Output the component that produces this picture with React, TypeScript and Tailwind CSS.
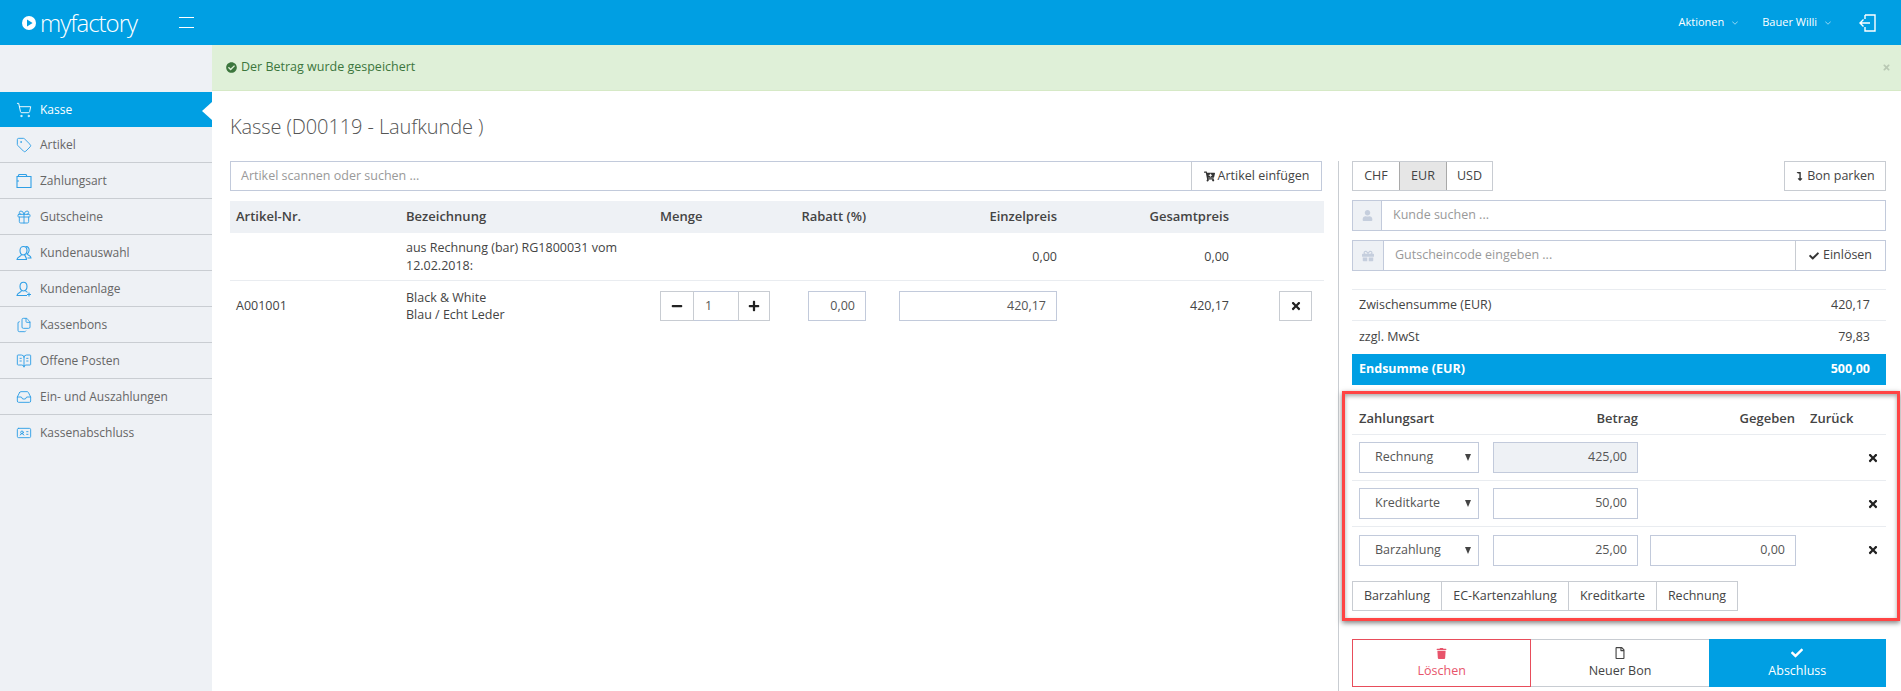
import { ChevronDown, Gift, ShoppingCart, Tag, Files, BookOpenText, Inbox, IdCard } from "lucide-react";
import { FaCheckCircle, FaUser, FaGift, FaTimes, FaCheck, FaCartPlus, FaLevelDownAlt, FaTrash, FaRegFile, FaMinus, FaPlus } from "react-icons/fa";

const WalletIcon = ({ className }: any) => (
  <svg width="16" height="16" viewBox="0 0 16 16" fill="none" stroke="currentColor" strokeWidth="1.1" className={className}>
    <path d="M1 3.5 H15 V14.5 H1 Z" />
    <path d="M2 3.5 L3 1.5 H10 L11 3.5" />
    <path d="M1 8 H3" />
  </svg>
);

const UsersIcon = ({ className }: any) => (
  <svg width="16" height="16" viewBox="0 0 16 16" fill="none" stroke="currentColor" strokeWidth="1.1" className={className}>
    <path d="M7 10 C4.5 9.5 4 7.5 4 5.5 C4 3 5.5 1.5 7.5 1.5 C9.5 1.5 11 3 11 5.5 C11 7.5 10 9.5 7 10" />
    <path d="M5.5 9.5 C5.5 11.5 1 11.5 1 14.5 H10.5 C10.5 12.5 9 11 8.5 9.5" />
    <path d="M9.5 1.8 C12 1 13.5 3.5 13 6 C12.8 7.5 12 8.5 11 9 C12 10.5 15 10.5 15 13 H11.5" />
  </svg>
);

const UserAddIcon = ({ className }: any) => (
  <svg width="16" height="16" viewBox="0 0 16 16" fill="none" stroke="currentColor" strokeWidth="1.1" className={className}>
    <path d="M7.5 10 C5 9.5 4 7.5 4 5.5 C4 3 5.5 1.2 7.5 1.2 C9.5 1.2 11 3 11 5.5 C11 7.5 10 9.5 7.5 10" />
    <path d="M5.5 9.5 C5.5 11.5 1 11.5 1 14.5 H11" />
    <path d="M9.5 9.5 C9.7 10.5 10.5 11 11.5 11.3" />
    <path d="M13 11.5 V15.5 M11 13.5 H15" />
  </svg>
);

const navItems = [
  { label: "Kasse", icon: ShoppingCart, active: true },
  { label: "Artikel", icon: Tag },
  { label: "Zahlungsart", icon: WalletIcon },
  { label: "Gutscheine", icon: Gift },
  { label: "Kundenauswahl", icon: UsersIcon },
  { label: "Kundenanlage", icon: UserAddIcon },
  { label: "Kassenbons", icon: Files },
  { label: "Offene Posten", icon: BookOpenText },
  { label: "Ein- und Auszahlungen", icon: Inbox },
  { label: "Kassenabschluss", icon: IdCard },
];

const tableCols = "grid grid-cols-[170px_254px_142px_70px_191px_172px_95px] items-center";

const inputCls = "h-[31px] border border-[#c2cadb] px-[10px] text-right text-[12.5px] text-[#555] flex items-center justify-end";

const Sidebar = () => (
  <aside className="w-[212px] shrink-0 bg-[#eef1f5] pt-[47px]">
    {navItems.map((item) => {
      const Icon = item.icon;
      return (
        <div
          key={item.label}
          className={`relative flex items-center gap-[8px] pl-[16px] text-[12px] ${
            item.active
              ? "h-[35px] bg-[#009fe3] text-white"
              : "h-[36px] border-b border-[#c9cdd2] text-[#666] last:border-b-0"
          }`}
        >
          <Icon size={16} strokeWidth={1.4} className={item.active ? "text-white" : "text-[#2f9fe6]"} />
          <span>{item.label}</span>
          {item.active && (
            <span className="absolute right-0 top-[10px] h-0 w-0 border-y-[9px] border-r-[10px] border-y-transparent border-r-white" />
          )}
        </div>
      );
    })}
  </aside>
);

const Header = () => (
  <header className="flex h-[45px] items-center bg-[#009fe3] text-white">
    <div className="flex w-[212px] items-center pl-[22px]">
      <svg width="14" height="14" viewBox="0 0 14 14" className="mt-[1px]">
        <circle cx="7" cy="7" r="7" fill="#fff" />
        <path d="M5 3.6 L10.6 7 L5 10.4 Z" fill="#009fe3" />
      </svg>
      <span className="ml-[4px] text-[24px] font-light leading-none tracking-[-1px]">myfactory</span>
      <span className="ml-[42px] flex h-[11px] w-[15px] shrink-0 flex-col justify-between">
        <span className="h-px bg-white" />
        <span className="h-px bg-white" />
      </span>
    </div>
    <div className="ml-auto flex items-center text-[11px]">
      <span>Aktionen</span>
      <ChevronDown size={10} className="ml-[6px] opacity-70" />
      <span className="ml-[22px]">Bauer Willi</span>
      <ChevronDown size={10} className="ml-[6px] opacity-70" />
      <svg width="17" height="18" viewBox="0 0 17 18" fill="none" stroke="#fff" strokeWidth="1.4" className="ml-[26px] mr-[25px]">
        <path d="M6 1 H16 V17 H6 V13" />
        <path d="M6 5 V1" />
        <path d="M11 9 H1 M4.5 5.5 L1 9 L4.5 12.5" />
      </svg>
    </div>
  </header>
);

const Cart = () => (
  <div className="w-[1126px] shrink-0 pl-[18px]">
    <h1 className="mt-[22px] h-[27px] text-[20px] font-light leading-[27px] tracking-[-0.1px] text-[#555]">Kasse (D00119 - Laufkunde )</h1>
    <div className="mt-[21px] flex h-[30px] w-[1092px] border border-[#c2cadb]">
      <div className="flex flex-1 items-center pl-[10px] text-[12.5px] text-[#999]">Artikel scannen oder suchen ...</div>
      <div className="flex w-[130px] items-center justify-center gap-[3px] border-l border-[#c8ccd2] text-[12.5px] text-[#444]">
        <FaCartPlus size={11} className="text-[#333]" /> Artikel einfügen
      </div>
    </div>

    <div className={`${tableCols} mt-[10px] h-[32px] w-[1094px] bg-[#eef1f5] text-[13px] font-semibold text-[#444]`}>
      <span className="pl-[6px]">Artikel-Nr.</span>
      <span className="pl-[6px]">Bezeichnung</span>
      <span className="pl-[6px]">Menge</span>
      <span className="text-right">Rabatt (%)</span>
      <span className="text-right">Einzelpreis</span>
      <span className="text-right">Gesamtpreis</span>
      <span />
    </div>
    <div className={`${tableCols} h-[48px] w-[1094px] border-b border-[#e9ecf0] text-[12.5px] leading-[18px] text-[#444]`}>
      <span />
      <span className="pl-[6px]">aus Rechnung (bar) RG1800031 vom 12.02.2018:</span>
      <span />
      <span />
      <span className="text-right">0,00</span>
      <span className="text-right">0,00</span>
      <span />
    </div>
    <div className={`${tableCols} h-[49px] w-[1094px] text-[12.5px] leading-[17px] text-[#444]`}>
      <span className="pl-[6px]">A001001</span>
      <span className="pl-[6px]">
        Black &amp; White
        <br />
        Blau / Echt Leder
      </span>
      <div className="ml-[6px] flex h-[30px] w-[110px]">
        <div className="flex w-[34px] items-center justify-center border border-[#c8ccd2]">
          <FaMinus size={12} className="text-[#222]" />
        </div>
        <div className="flex w-[44px] items-center border-y border-[#c2cadb] pl-[11px] text-[#555]">1</div>
        <div className="flex w-[32px] items-center justify-center border border-[#c8ccd2]">
          <FaPlus size={12} className="text-[#222]" />
        </div>
      </div>
      <div className={`${inputCls} !h-[30px] w-[58px] justify-self-end`}>0,00</div>
      <div className={`${inputCls} !h-[30px] w-[158px] justify-self-end`}>420,17</div>
      <span className="text-right">420,17</span>
      <div className="ml-[50px] flex h-[30px] w-[33px] items-center justify-center border border-[#c8ccd2]">
        <FaTimes size={12} className="text-[#222]" />
      </div>
    </div>
  </div>
);

const PaymentRow = ({ method, amount, given, disabled, last }: any) => (
  <div className={`flex h-[46px] items-center pl-[7px] ${last ? "" : "border-b border-[#e9ecf0]"}`}>
    <div className="relative flex h-[31px] w-[120px] items-center border border-[#c2cadb] pl-[15px] text-[12.5px] text-[#555]">
      {method}
      <span className="absolute right-[7px] top-[11px] h-0 w-0 border-x-[3.5px] border-t-[7px] border-x-transparent border-t-[#444]" />
    </div>
    <div className={`${inputCls} ml-[14px] w-[145px] ${disabled ? "bg-[#eef1f5]" : "bg-white"}`}>{amount}</div>
    {given && <div className={`${inputCls} ml-[12px] w-[146px]`}>{given}</div>}
    <FaTimes size={12} className="ml-auto mr-[7px] text-[#222]" />
  </div>
);

const Checkout = () => (
  <div className="relative ml-[13px] w-[534px] pt-[70px]">
    <div className="flex justify-between">
      <div className="flex h-[30px] border border-[#c8ccd2] text-[12.5px] text-[#444]">
        <span className="flex w-[46px] items-center justify-center">CHF</span>
        <span className="flex w-[48px] items-center justify-center border-x border-[#a9a9a9] bg-[#e6e6e6]">EUR</span>
        <span className="flex w-[45px] items-center justify-center">USD</span>
      </div>
      <div className="flex h-[30px] w-[102px] items-center justify-center gap-[3px] border border-[#c8ccd2] text-[12.5px] text-[#444]">
        <FaLevelDownAlt size={9} className="text-[#333]" /> Bon parken
      </div>
    </div>
    <div className="mt-[9px] flex h-[31px] border border-[#c2cadb]">
      <div className="flex w-[29px] items-center justify-center border-r border-[#c2cadb] bg-[#eef1f5]">
        <FaUser size={11} className="text-[#c5cedd]" />
      </div>
      <div className="flex items-center pl-[11px] text-[12.5px] text-[#999]">Kunde suchen ...</div>
    </div>
    <div className="mt-[9px] flex h-[31px] border border-[#c2cadb]">
      <div className="flex w-[31px] items-center justify-center border-r border-[#c2cadb] bg-[#eef1f5]">
        <FaGift size={12} className="text-[#c5cedd]" />
      </div>
      <div className="flex flex-1 items-center pl-[11px] text-[12.5px] text-[#999]">Gutscheincode eingeben ...</div>
      <div className="flex w-[90px] items-center justify-center gap-[4px] border-l border-[#c8ccd2] text-[12.5px] text-[#444]">
        <FaCheck size={10} className="text-[#333]" /> Einlösen
      </div>
    </div>

    <div className="mt-[18px] flex h-[32px] items-center justify-between border-y border-[#e9ecf0] px-[7px] pr-[16px] text-[12.5px] text-[#444]">
      <span>Zwischensumme (EUR)</span>
      <span>420,17</span>
    </div>
    <div className="flex h-[33px] items-center justify-between px-[7px] pr-[16px] text-[12.5px] text-[#444]">
      <span>zzgl. MwSt</span>
      <span>79,83</span>
    </div>
    <div className="flex h-[31px] items-center justify-between bg-[#009fe3] px-[7px] pr-[16px] text-[12.5px] font-bold text-white">
      <span>Endsumme (EUR)</span>
      <span>500,00</span>
    </div>

    <div className="mt-[18px] flex h-[32px] items-center border-b border-[#e9ecf0] text-[13px] font-semibold text-[#444]">
      <span className="w-[228px] pl-[7px]">Zahlungsart</span>
      <span className="w-[58px] text-right">Betrag</span>
      <span className="w-[157px] text-right">Gegeben</span>
      <span className="ml-[15px]">Zurück</span>
    </div>
    <PaymentRow method="Rechnung" amount="425,00" disabled />
    <PaymentRow method="Kreditkarte" amount="50,00" />
    <PaymentRow method="Barzahlung" amount="25,00" given="0,00" last />

    <div className="mt-[8px] flex h-[30px] w-[386px] border border-[#c8ccd2] text-[12.5px] text-[#444]">
      <span className="flex w-[88px] items-center justify-center">Barzahlung</span>
      <span className="flex w-[127px] items-center justify-center border-l border-[#c8ccd2]">EC-Kartenzahlung</span>
      <span className="flex w-[88px] items-center justify-center border-l border-[#c8ccd2]">Kreditkarte</span>
      <span className="flex flex-1 items-center justify-center border-l border-[#c8ccd2]">Rechnung</span>
    </div>

    <div className="mt-[28px] flex h-[48px] text-[12.5px] leading-[16px]">
      <div className="flex flex-1 flex-col items-center justify-center border border-[#e84d5b] text-[#e8546b]">
        <FaTrash size={11} />
        <span className="mt-[4px]">Löschen</span>
      </div>
      <div className="flex flex-1 flex-col items-center justify-center border-y border-[#c8ccd2] text-[#444]">
        <FaRegFile size={12} />
        <span className="mt-[4px]">Neuer Bon</span>
      </div>
      <div className="flex flex-1 flex-col items-center justify-center bg-[#009fe3] text-white">
        <FaCheck size={12} />
        <span className="mt-[4px]">Abschluss</span>
      </div>
    </div>

    {/* red annotation box over the payment block */}
    <div className="pointer-events-none absolute left-[-10px] top-[300px] h-[230px] w-[558px] border-[3px] border-[#ff4444] shadow-[0_2px_5px_rgba(0,0,0,0.5),inset_0_2px_4px_rgba(0,0,0,0.35)]" />
  </div>
);

export default function App() {
  return (
    <div className="flex h-[691px] w-[1901px] flex-col overflow-hidden bg-white font-['Open_Sans',sans-serif]">
      <Header />
      <div className="flex flex-1">
        <Sidebar />
        <main className="relative flex-1">
          <div className="relative flex h-[46px] items-center gap-[4px] border-b border-[#d6e9c6] bg-[#dff0d8] pl-[14px] text-[12.5px] text-[#3c763d]">
            <FaCheckCircle size={11} />
            <span>Der Betrag wurde gespeichert</span>
            <FaTimes size={9} className="absolute right-[10px] top-[18px] text-[#b9c9b4]" />
          </div>
          <div className="flex h-[600px]">
            <Cart />
            <div className="mt-[70px] w-px bg-[#c9cdd2]" />
            <Checkout />
          </div>
        </main>
      </div>
    </div>
  );
}
